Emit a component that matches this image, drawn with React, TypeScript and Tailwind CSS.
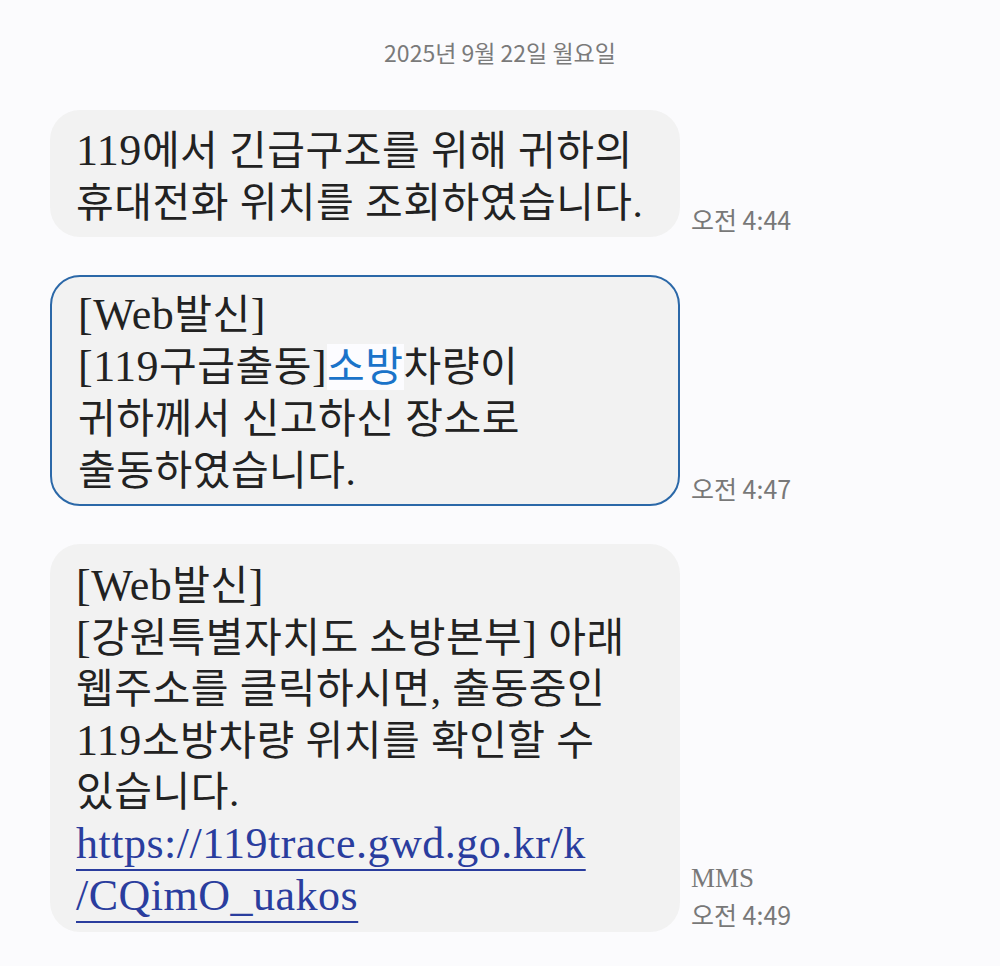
import React from "react";

const bodyFont = { fontFamily: '"Liberation Serif", "Noto Sans CJK KR", serif' };

function L({ children }: { children: React.ReactNode }) {
  return <span className="text-[44px]">{children}</span>;
}

function Row({ children, meta, box }: { children: React.ReactNode; meta: React.ReactNode; box: string }) {
  return (
    <div className="flex items-end">
      <div
        className={
          "w-[630px] shrink-0 rounded-[30px] bg-[#f2f2f2] pl-[26px] pr-[16px] text-[41px] tracking-[0.5px] text-[#222222] " +
          box
        }
        style={bodyFont}
      >
        {children}
      </div>
      <div
        className="ml-[11px] text-[25px] leading-[36px] text-[#787878]"
        style={{ fontFamily: '"Noto Sans CJK KR", "Noto Sans", sans-serif' }}
      >
        {meta}
      </div>
    </div>
  );
}

export default function App() {
  return (
    <div className="min-h-[966px] w-[1000px] bg-[#fbfbfd] pt-[35px]">
      <div
        className="w-[1000px] text-center text-[23px] leading-[34px] text-[#7a7a7a]"
        style={{ fontFamily: '"Noto Sans CJK KR", "Noto Sans", sans-serif' }}
      >
        2025년 9월 22일 월요일
      </div>
      <div className="mt-[41px] flex flex-col gap-[38px] pl-[50px]">
        <Row box="leading-[52px] pt-[15px] pb-[8px]" meta={<div>오전 4:44</div>}>
          <div><L>119</L>에서 긴급구조를 위해 귀하의</div>
          <div>휴대전화 위치를 조회하였습니다.</div>
        </Row>
        <Row
          box="leading-[52px] border-[2px] border-[#2b68a8] pt-[12px] pb-[7px]"
          meta={<div>오전 4:47</div>}
        >
          <div><L>[Web</L>발신<L>]</L></div>
          <div>
            <L>[119</L>구급출동<L>]</L><span className="bg-[#fcfcff] text-[#1a73c9]">소방</span>차량이
          </div>
          <div>귀하께서 신고하신 장소로</div>
          <div>출동하였습니다.</div>
        </Row>
        <Row
          box="leading-[51px] pt-[16px] pb-[10px]"
          meta={
            <div>
              <div className="text-[27px]" style={bodyFont}>MMS</div>
              <div>오전 4:49</div>
            </div>
          }
        >
          <div><L>[Web</L>발신<L>]</L></div>
          <div><L>[</L>강원특별자치도 소방본부<L>]</L> 아래</div>
          <div>웹주소를 클릭하시면, 출동중인</div>
          <div><L>119</L>소방차량 위치를 확인할 수</div>
          <div>있습니다.</div>
          <div className="text-[#2a3d9e] underline decoration-[2px] underline-offset-[11px]">
            <L>https://119trace.gwd.go.kr/k</L>
          </div>
          <div className="text-[#2a3d9e] underline decoration-[2px] underline-offset-[11px]">
            <L>/CQimO_uakos</L>
          </div>
        </Row>
      </div>
    </div>
  );
}
